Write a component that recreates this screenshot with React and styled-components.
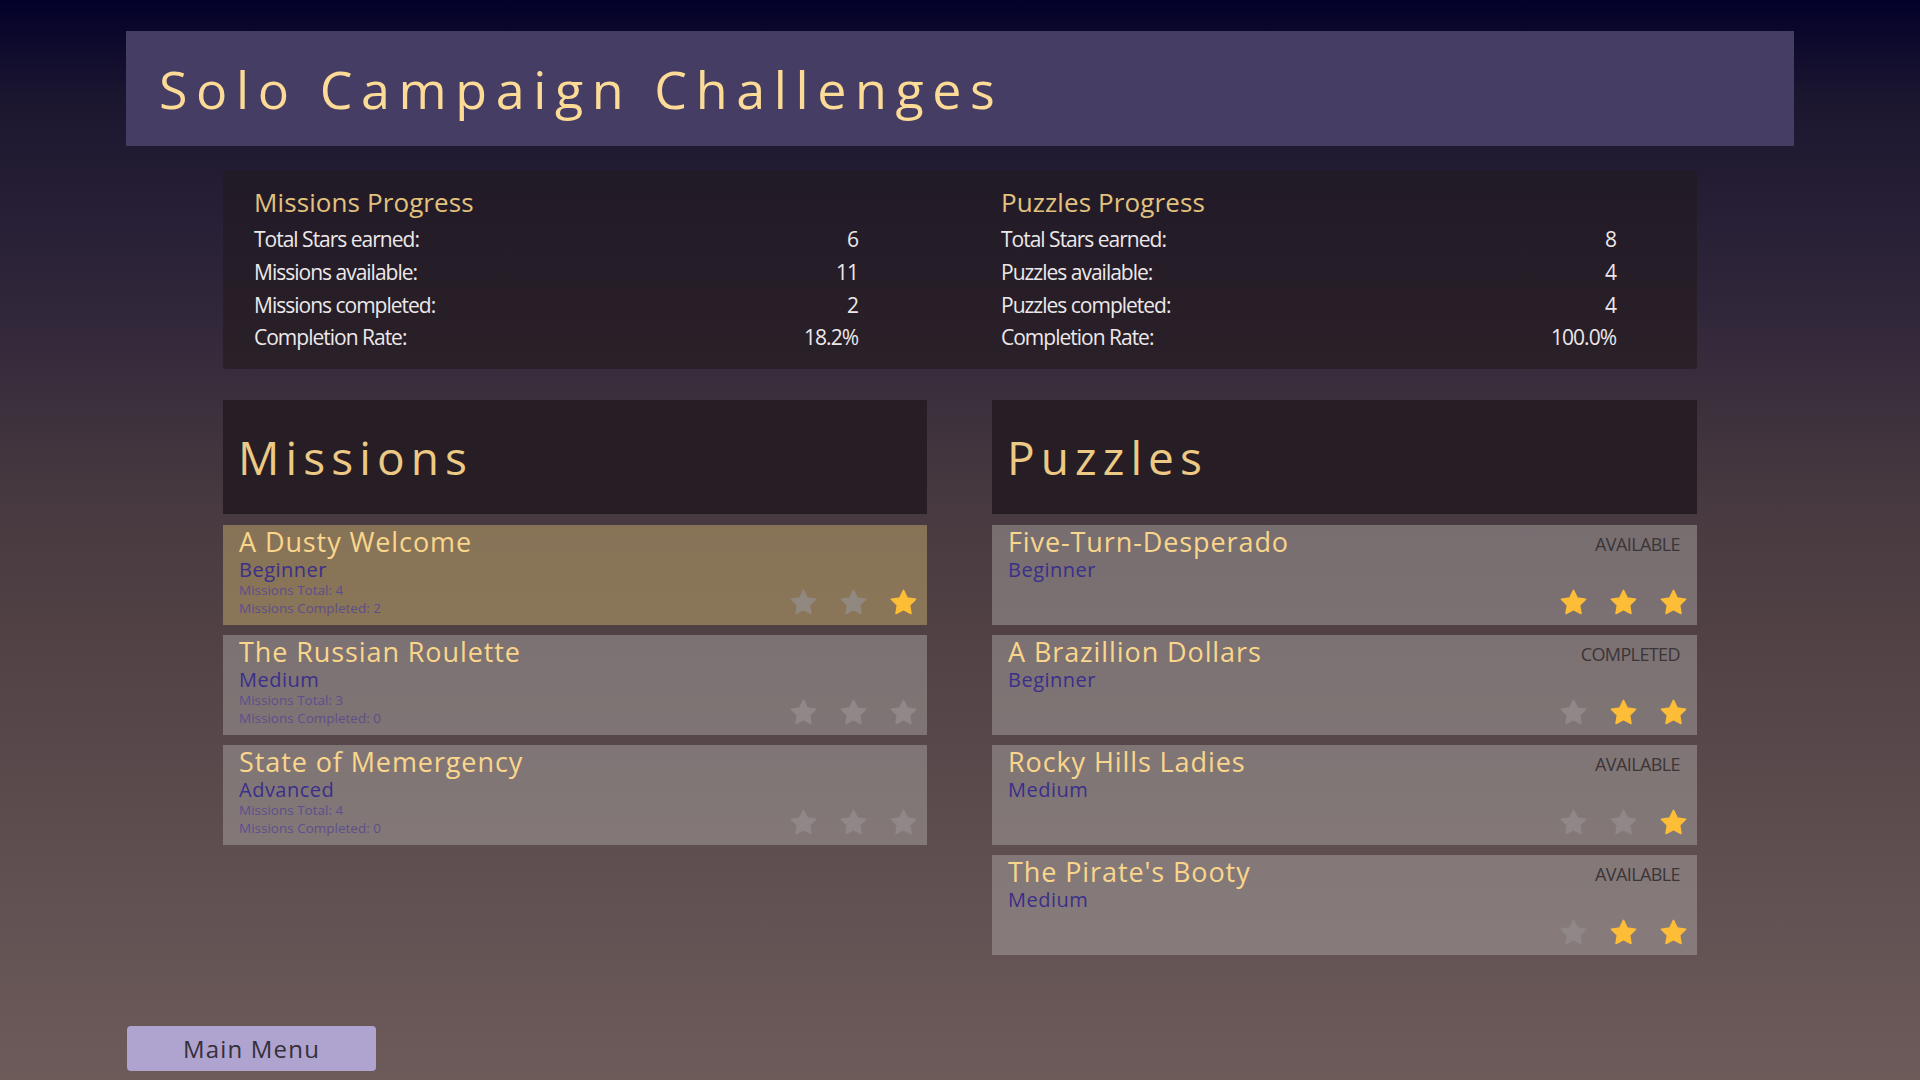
import React from "react";
import styled, { createGlobalStyle } from "styled-components";

const GlobalStyle = createGlobalStyle`
  html, body {
    margin: 0;
    padding: 0;
  }
  body {
    background: linear-gradient(
      180deg,
      #03002a 0%,
      #1b162f 9%,
      #30263a 28%,
      #46393f 46%,
      #564548 65%,
      #625152 83%,
      #6d5b5a 100%
    );
    min-height: 1080px;
    font-family: "Open Sans", "Noto Sans", sans-serif;
  }
`;

const Page = styled.div`
  box-sizing: border-box;
  height: 1080px;
  padding: 31px 126px 0;
  display: flex;
  flex-direction: column;
`;

const Banner = styled.div`
  height: 115px;
  background: #463d64;
  display: flex;
  align-items: center;
  padding-left: 33px;
`;

const BannerTitle = styled.h1`
  margin: 0;
  font-weight: 400;
  font-size: 52px;
  letter-spacing: 8.6px;
  color: #fcdb97;
`;

const Content = styled.div`
  width: 1474px;
  margin: 24px auto 0;
`;

const StatsPanel = styled.div`
  box-sizing: border-box;
  height: 199px;
  background: linear-gradient(180deg, #211a27 0%, #2a2028 100%);
  border-radius: 3px;
  padding: 11px 0 0 31px;
  display: grid;
  grid-template-columns: 604px 615px;
  column-gap: 143px;
`;

const StatsColumn = styled.div`
  display: flex;
  flex-direction: column;
`;

const StatsHeading = styled.div`
  font-size: 26px;
  line-height: 42px;
  color: #e1c27e;
  letter-spacing: 0.1px;
`;

const StatsRow = styled.div`
  display: flex;
  justify-content: space-between;
  font-size: 21px;
  line-height: 32.8px;
  letter-spacing: -1px;
  color: #ece8ea;
  &:first-of-type {
    margin-top: 1px;
  }
`;

const Columns = styled.div`
  margin-top: 31px;
  display: grid;
  grid-template-columns: 704px 705px;
  column-gap: 65px;
  align-items: start;
`;

const Column = styled.div`
  display: flex;
  flex-direction: column;
  gap: 10px;
`;

const SectionHeader = styled.div`
  height: 114px;
  background: #261e24;
  display: flex;
  align-items: center;
  padding-left: 15px;
  margin-bottom: 1px;
`;

const SectionTitle = styled.h2`
  margin: 0;
  font-weight: 400;
  font-size: 46px;
  letter-spacing: 6.1px;
  color: #ecc985;
`;

const Card = styled.div`
  box-sizing: border-box;
  height: 100px;
  padding: 1px 9px 7px 16px;
  display: flex;
  justify-content: space-between;
  background: ${(p) =>
    p.$highlight ? "rgba(200, 174, 110, 0.49)" : "rgba(172, 168, 166, 0.48)"};
`;

const CardInfo = styled.div`
  display: flex;
  flex-direction: column;
`;

const CardTitle = styled.div`
  font-size: 27px;
  line-height: 32px;
  letter-spacing: 0.9px;
  color: #fad68c;
`;

const Level = styled.div`
  font-size: 20px;
  line-height: 23px;
  letter-spacing: 0.5px;
  color: #3a2f8a;
`;

const SmallStat = styled.div`
  font-size: 13.5px;
  line-height: 18px;
  color: #5c4f8c;
`;

const CardSide = styled.div`
  display: flex;
  flex-direction: column;
  align-items: flex-end;
  justify-content: space-between;
`;

const Status = styled.div`
  margin-top: 7px;
  margin-right: 8px;
  font-size: 18px;
  line-height: 22px;
  letter-spacing: -0.6px;
  color: #3b3537;
`;

const Stars = styled.div`
  margin-top: auto;
  display: flex;
  gap: 20px;
`;

const StarIcon = styled.svg`
  width: 31px;
  height: 31px;
  margin: 0 -0.5px;
  display: block;
  color: ${(p) => (p.$on ? "#fdbd36" : p.$gold ? "#918880" : "#908888")};
`;

const Footer = styled.div`
  margin-top: auto;
  padding-bottom: 9px;
`;

const MenuButton = styled.button`
  width: 249px;
  height: 45px;
  margin-left: 1px;
  border: none;
  border-radius: 4px;
  background: #afa3cf;
  color: #35303a;
  font-family: "Open Sans", "Noto Sans", sans-serif;
  font-size: 24px;
  letter-spacing: 1.2px;
  cursor: pointer;
`;

const Star = ({ on, gold }) => (
  <StarIcon viewBox="0 0 24 24" $on={on} $gold={gold}>
    <path
      d="M12 2.6l2.9 5.9 6.5.95-4.7 4.6 1.1 6.45L12 17.45l-5.8 3.05 1.1-6.45-4.7-4.6 6.5-.95z"
      fill="currentColor"
      stroke="currentColor"
      strokeWidth="1.2"
      strokeLinejoin="round"
    />
  </StarIcon>
);

const StarRow = ({ count, gold }) => (
  <Stars>
    {[0, 1, 2].map((i) => (
      <Star key={i} on={i >= 3 - count} gold={gold} />
    ))}
  </Stars>
);

const missions = [
  { title: "A Dusty Welcome", level: "Beginner", total: 4, done: 2, stars: 1, highlight: true },
  { title: "The Russian Roulette", level: "Medium", total: 3, done: 0, stars: 0 },
  { title: "State of Memergency", level: "Advanced", total: 4, done: 0, stars: 0 },
];

const puzzles = [
  { title: "Five-Turn-Desperado", level: "Beginner", status: "Available", stars: 3 },
  { title: "A Brazillion Dollars", level: "Beginner", status: "Completed", stars: 2 },
  { title: "Rocky Hills Ladies", level: "Medium", status: "Available", stars: 1 },
  { title: "The Pirate's Booty", level: "Medium", status: "Available", stars: 2 },
];

const stats = [
  {
    heading: "Missions Progress",
    rows: [
      ["Total Stars earned:", "6"],
      ["Missions available:", "11"],
      ["Missions completed:", "2"],
      ["Completion Rate:", "18.2%"],
    ],
  },
  {
    heading: "Puzzles Progress",
    rows: [
      ["Total Stars earned:", "8"],
      ["Puzzles available:", "4"],
      ["Puzzles completed:", "4"],
      ["Completion Rate:", "100.0%"],
    ],
  },
];

const App = () => {
  return (
    <>
      <GlobalStyle />
      <Page>
        <Banner>
          <BannerTitle>Solo Campaign Challenges</BannerTitle>
        </Banner>
        <Content>
          <StatsPanel>
            {stats.map((s) => (
              <StatsColumn key={s.heading}>
                <StatsHeading>{s.heading}</StatsHeading>
                {s.rows.map(([label, value]) => (
                  <StatsRow key={label}>
                    <span>{label}</span>
                    <span>{value}</span>
                  </StatsRow>
                ))}
              </StatsColumn>
            ))}
          </StatsPanel>
          <Columns>
            <Column>
              <SectionHeader>
                <SectionTitle>Missions</SectionTitle>
              </SectionHeader>
              {missions.map((m) => (
                <Card key={m.title} $highlight={m.highlight}>
                  <CardInfo>
                    <CardTitle>{m.title}</CardTitle>
                    <Level>{m.level}</Level>
                    <SmallStat>Missions Total: {m.total}</SmallStat>
                    <SmallStat>Missions Completed: {m.done}</SmallStat>
                  </CardInfo>
                  <CardSide>
                    <StarRow count={m.stars} gold={m.highlight} />
                  </CardSide>
                </Card>
              ))}
            </Column>
            <Column>
              <SectionHeader>
                <SectionTitle>Puzzles</SectionTitle>
              </SectionHeader>
              {puzzles.map((p) => (
                <Card key={p.title}>
                  <CardInfo>
                    <CardTitle>{p.title}</CardTitle>
                    <Level>{p.level}</Level>
                  </CardInfo>
                  <CardSide>
                    <Status>{p.status.toUpperCase()}</Status>
                    <StarRow count={p.stars} />
                  </CardSide>
                </Card>
              ))}
            </Column>
          </Columns>
        </Content>
        <Footer>
          <MenuButton>Main Menu</MenuButton>
        </Footer>
      </Page>
    </>
  );
};

export default App;
